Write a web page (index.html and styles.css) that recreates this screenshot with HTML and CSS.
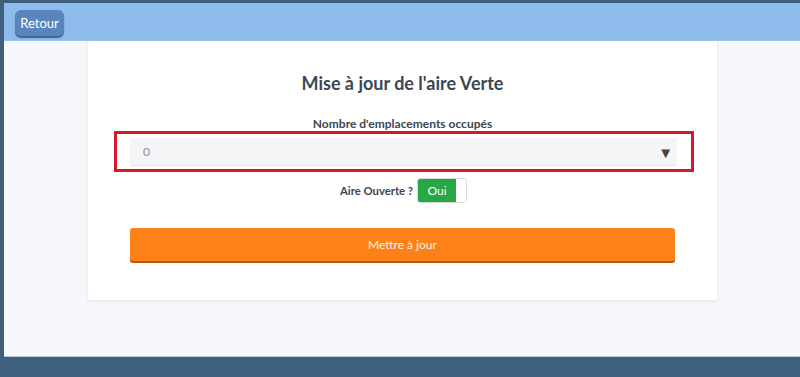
FILE: index.html
```html
<!DOCTYPE html>
<html lang="fr">
<head>
    <meta charset="UTF-8">
    <meta name="viewport" content="width=device-width, initial-scale=1.0">
    <title>Mise à jour de l'aire Verte</title>
    <link rel="stylesheet" href="styles.css">
</head>
<body>
    <div class="frame">
        <header class="topbar">
            <button class="back-btn">Retour</button>
        </header>

        <main class="page">
            <section class="card">
                <h1 class="card-title">Mise à jour de l'aire Verte</h1>

                <label class="field-label">Nombre d'emplacements occupés</label>
                <div class="highlight">
                    <div class="select-box">
                        <span class="select-value">0</span>
                        <span class="select-arrow">▼</span>
                    </div>
                </div>

                <div class="toggle-row">
                    <span class="toggle-label">Aire Ouverte ?</span>
                    <div class="toggle">
                        <span class="toggle-on">Oui</span>
                        <span class="toggle-knob"></span>
                    </div>
                </div>

                <button class="submit-btn">Mettre à jour</button>
            </section>
        </main>
    </div>
</body>
</html>
```

FILE: styles.css
```css
:root {
    --frame-color: #3f5f7e;
    --header-bg: #8dbbeb;
    --page-bg: #f5f7fa;
    --text-dark: #3b4754;
}

* {
    box-sizing: border-box;
    margin: 0;
    padding: 0;
}

body {
    font-family: Lato, 'Open Sans', 'Liberation Sans', sans-serif;
    background: var(--frame-color);
    height: 377px;
    overflow: hidden;
}

.frame {
    margin: 3px 0 0 4px;
    height: 354px;
    display: flex;
    flex-direction: column;
    border-bottom: 1px solid #b9c7d4;
}

/* barre du haut */
.topbar {
    height: 38px;
    background: var(--header-bg);
    padding: 7px 0 0 11px;
    border-bottom: 1px solid #9cc3ec;
}

.back-btn {
    width: 49px;
    height: 26px;
    background: #5985bc;
    color: white;
    border: none;
    border-radius: 6px;
    font-family: inherit;
    font-size: 13px;
    box-shadow: 0 2px 1px #3f6592;
    cursor: pointer;
}

/* contenu */
.page {
    flex: 1;
    background: var(--page-bg);
    padding-left: 84px;
}

.card {
    width: 629px;
    height: 259px;
    background: white;
    box-shadow: 0 1px 3px rgba(0, 0, 0, 0.08);
    display: flex;
    flex-direction: column;
    align-items: center;
    padding-top: 31px;
}

.card-title {
    font-size: 18px;
    font-weight: 700;
    color: var(--text-dark);
    margin-bottom: 22px;
}

.field-label {
    font-size: 12px;
    font-weight: 700;
    color: var(--text-dark);
}

.highlight {
    width: 580px;
    height: 41px;
    margin-left: 3px;
    border: 3px solid #d3182a;
    padding: 4px 14px 3px 13px;
}

.select-box {
    height: 28px;
    background: #f4f5f6;
    border-bottom: 1px solid #e4e7ea;
    display: flex;
    align-items: center;
    justify-content: space-between;
    padding: 0 4px 0 13px;
}

.select-value {
    font-size: 12px;
    color: #8a8f94;
}

.select-arrow {
    font-size: 15px;
    color: #4a4244;
}

.toggle-row {
    display: flex;
    align-items: center;
    gap: 4px;
    margin-top: 6px;
    margin-left: 2px;
}

.toggle-label {
    font-size: 11.3px;
    font-weight: 700;
    color: var(--text-dark);
}

.toggle {
    display: flex;
    width: 50px;
    height: 25px;
    border: 1px solid #d5d9dc;
    border-radius: 3px;
    overflow: hidden;
}

.toggle-on {
    flex: 1;
    background: #28a745;
    color: white;
    font-size: 12px;
    display: flex;
    align-items: center;
    justify-content: center;
}

.toggle-knob {
    width: 10px;
    background: white;
}

.submit-btn {
    width: 545px;
    height: 33px;
    margin-top: 25px;
    background: #fb8118;
    color: #fdf2e6;
    border: none;
    border-radius: 3px;
    font-family: inherit;
    font-size: 12px;
    box-shadow: 0 2px 0 #b25a12;
    cursor: pointer;
}
```
